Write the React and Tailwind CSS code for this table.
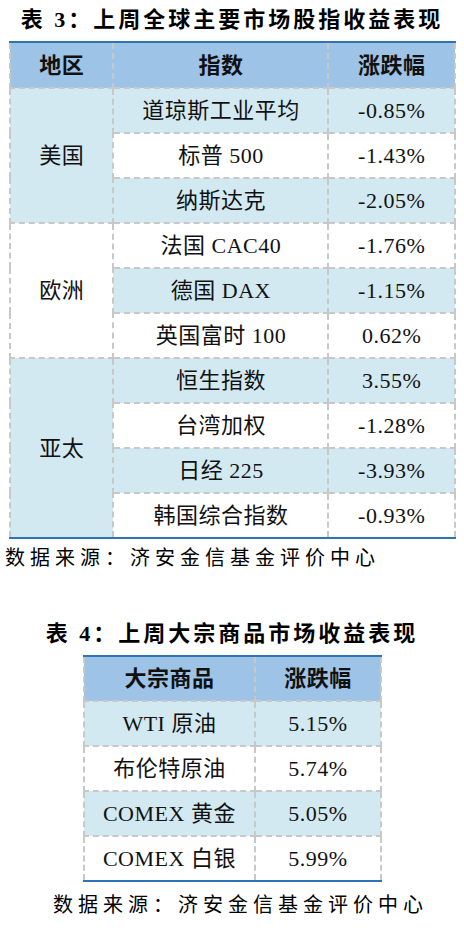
import React from 'react';

const cjk = { fontFamily: '"Liberation Serif", "Noto Sans CJK SC", serif' };

const LIGHT = 'bg-[#d3e9f1]';
const WHITE = 'bg-white';

const cell = 'border-2 border-dashed border-[#c8c8c8] text-center align-middle';
const lastCell = 'border-b-[#2e74b5] [border-bottom-style:solid]';

const globalRows = [
  {
    region: '美国',
    bg: LIGHT,
    items: [
      ['道琼斯工业平均', '-0.85%', LIGHT],
      ['标普 500', '-1.43%', WHITE],
      ['纳斯达克', '-2.05%', LIGHT],
    ],
  },
  {
    region: '欧洲',
    bg: WHITE,
    items: [
      ['法国 CAC40', '-1.76%', WHITE],
      ['德国 DAX', '-1.15%', LIGHT],
      ['英国富时 100', '0.62%', WHITE],
    ],
  },
  {
    region: '亚太',
    bg: LIGHT,
    items: [
      ['恒生指数', '3.55%', LIGHT],
      ['台湾加权', '-1.28%', WHITE],
      ['日经 225', '-3.93%', LIGHT],
      ['韩国综合指数', '-0.93%', WHITE],
    ],
  },
];

const commodities = [
  ['WTI 原油', '5.15%', LIGHT],
  ['布伦特原油', '5.74%', WHITE],
  ['COMEX 黄金', '5.05%', LIGHT],
  ['COMEX 白银', '5.99%', WHITE],
];

const Title = ({ children }) => (
  <h2 className="text-center text-[22px] font-bold tracking-[3px] text-black leading-none">{children}</h2>
);

const Source = ({ className }) => (
  <p className={`text-[20px] tracking-[5px] text-black leading-none ${className}`}>数据来源：济安金信基金评价中心</p>
);

export default function App() {
  return (
    <div className="w-[464px] h-[930px] bg-white text-[#111]" style={cjk}>
      <div className="pt-[9px]">
        <Title>表 3：上周全球主要市场股指收益表现</Title>
      </div>

      <table className="mt-[10px] ml-[9px] w-[447px] border-collapse border-t-2 border-t-[#2e74b5] text-[22px] tracking-[0.5px]">
        <colgroup>
          <col className="w-[104px]" />
          <col className="w-[216px]" />
          <col className="w-[127px]" />
        </colgroup>
        <thead>
          <tr className="h-[46px] bg-[#9dc3e6] font-bold">
            <th className={`${cell} border-t-0`}>地区</th>
            <th className={`${cell} border-t-0`}>指数</th>
            <th className={`${cell} border-t-0`}>涨跌幅</th>
          </tr>
        </thead>
        <tbody>
          {globalRows.map((g, gi) =>
            g.items.map((it, i) => {
              const isLast = gi === globalRows.length - 1 && i === g.items.length - 1;
              const last = isLast ? lastCell : '';
              return (
                <tr key={`${gi}-${i}`} className="h-[45px]">
                  {i === 0 && (
                    <td
                      rowSpan={g.items.length}
                      className={`${cell} ${g.bg} ${gi === globalRows.length - 1 ? lastCell : ''}`}
                    >
                      {g.region}
                    </td>
                  )}
                  <td className={`${cell} ${it[2]} ${last}`}>{it[0]}</td>
                  <td className={`${cell} ${it[2]} ${last}`}>{it[1]}</td>
                </tr>
              );
            })
          )}
        </tbody>
      </table>

      <Source className="mt-[9px] ml-[5px]" />

      <div className="mt-[55px]">
        <Title>表 4：上周大宗商品市场收益表现</Title>
      </div>

      <table className="mt-[10px] ml-[83px] w-[299px] border-collapse border-t-2 border-t-[#2e74b5] text-[22px] tracking-[0.5px]">
        <colgroup>
          <col className="w-[172px]" />
          <col className="w-[127px]" />
        </colgroup>
        <thead>
          <tr className="h-[45px] bg-[#9dc3e6] font-bold">
            <th className={`${cell} border-t-0`}>大宗商品</th>
            <th className={`${cell} border-t-0`}>涨跌幅</th>
          </tr>
        </thead>
        <tbody>
          {commodities.map((c, i) => {
            const last = i === commodities.length - 1 ? lastCell : '';
            return (
              <tr key={c[0]} className="h-[45px]">
                <td className={`${cell} ${c[2]} ${last}`}>{c[0]}</td>
                <td className={`${cell} ${c[2]} ${last}`}>{c[1]}</td>
              </tr>
            );
          })}
        </tbody>
      </table>

      <Source className="mt-[13px] ml-[53px]" />
    </div>
  );
}
